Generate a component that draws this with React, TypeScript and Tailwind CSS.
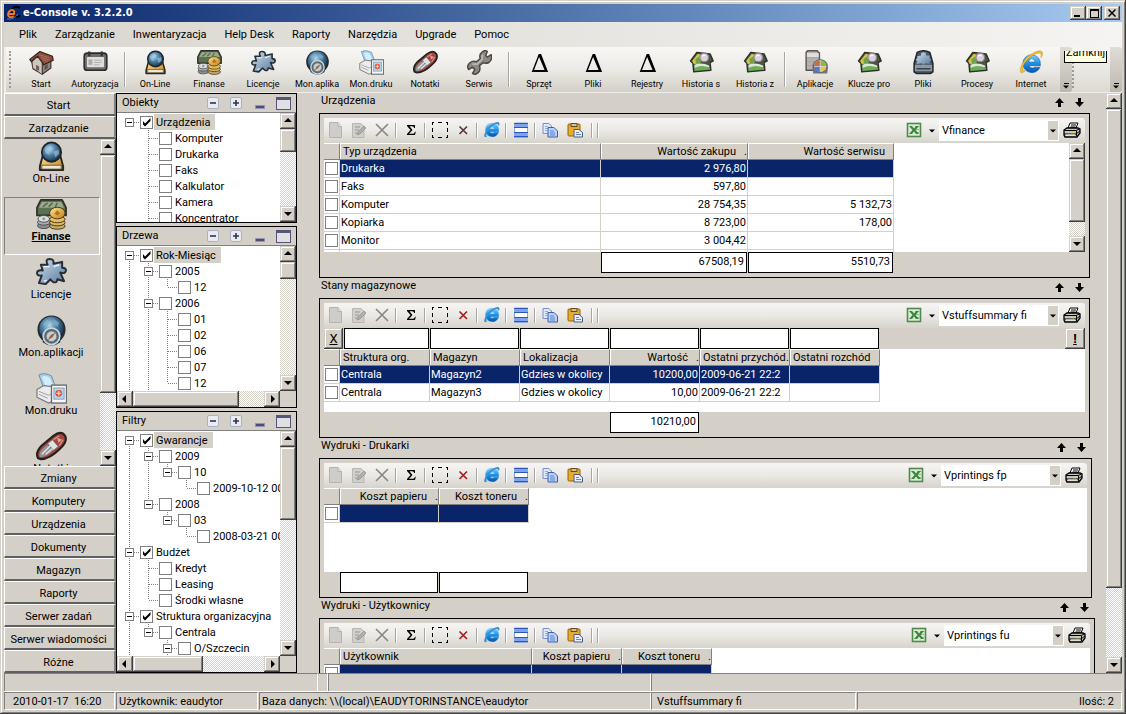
import React from "react";

const raised =
  "bg-[#d4d0c8] shadow-[inset_-1px_-1px_0_#404040,inset_1px_1px_0_#d4d0c8,inset_-2px_-2px_0_#808080,inset_2px_2px_0_#fff]";
const dither = "bg-[repeating-conic-gradient(#fff_0_25%,#d4d0c8_0_50%)] bg-[length:2px_2px]";

/* ---------- gradients shared by the icons ---------- */

function IconDefs() {
  return (
    <svg className="absolute size-0" aria-hidden="true">
      <defs>
        <radialGradient id="globe" cx="0.4" cy="0.35" r="0.7">
          <stop offset="0" stopColor="#b9d9ec" />
          <stop offset="0.45" stopColor="#4d7fa6" />
          <stop offset="1" stopColor="#12293f" />
        </radialGradient>
        <linearGradient id="steel" x1="0" y1="0" x2="1" y2="1">
          <stop offset="0" stopColor="#f2f4f6" />
          <stop offset="1" stopColor="#7d848c" />
        </linearGradient>
        <linearGradient id="puzzle" x1="0" y1="0" x2="1" y2="1">
          <stop offset="0" stopColor="#cfe0ef" />
          <stop offset="1" stopColor="#56789b" />
        </linearGradient>
        <linearGradient id="gold" x1="0" y1="0" x2="1" y2="1">
          <stop offset="0" stopColor="#ffe49a" />
          <stop offset="1" stopColor="#c07f12" />
        </linearGradient>
        <linearGradient id="ie" x1="0" y1="0" x2="0" y2="1">
          <stop offset="0" stopColor="#7fd0f8" />
          <stop offset="0.5" stopColor="#1f8fdf" />
          <stop offset="1" stopColor="#0a54b0" />
        </linearGradient>
      </defs>
    </svg>
  );
}

type IconProps = { className?: string };

function Svg({ className = "size-[26px]", children }: { className?: string; children: React.ReactNode }) {
  return (
    <svg viewBox="0 0 32 32" className={`shrink-0 ${className}`} aria-hidden="true">
      {children}
    </svg>
  );
}

const HouseIcon = (p: IconProps) => (
  <Svg {...p}>
    <path d="M3 12 L14 17 L17 31 L5 24Z" fill="#a89d95" stroke="#3b322d" strokeWidth="1.400" strokeLinejoin="round" />
    <path d="M5 22 V14 L11 8 L17 17 V31Z" fill="#cfc6be" />
    <path d="M17 17 L28 11 V23 L17 31Z" fill="#8f857e" stroke="#3b322d" strokeWidth="1.400" strokeLinejoin="round" />
    <path d="M1 12 L14 2 L30 8 L31 13 L19 19 L11 8 L3 15Z" fill="#8b4c3b" stroke="#33201a" strokeWidth="1.500" strokeLinejoin="round" />
    <path d="M13 6 L26 10 M15 9 L26 13 M17 12 L24 15" stroke="#b87a68" fill="none" />
    <path d="M9 19 L13 21 V27 L9 25Z" fill="#6d6058" />
    <path d="M20 20 L24 18 V23 L20 26Z" fill="#5e544d" />
  </Svg>
);

const CardIcon = (p: IconProps) => (
  <Svg {...p}>
    <rect x="1.500" y="4" width="29" height="22" rx="4" fill="#6d6d6f" stroke="#2b2b2d" strokeWidth="2" />
    <rect x="5" y="9" width="22" height="13" rx="1" fill="#dedede" />
    <path d="M8 2 v6 M24 2 v6" stroke="#333" strokeWidth="3" />
    <rect x="7" y="12" width="5" height="7" fill="#b6a9a4" />
    <path d="M14 13 h10 M14 16 h10 M14 19 h7" stroke="#b4b4b4" strokeWidth="1.300" />
  </Svg>
);

const OnlineIcon = (p: IconProps) => (
  <Svg {...p}>
    <path d="M7 15 H25 L28 26 V30 H4 V26Z" fill="url(#gold)" stroke="#2a2520" strokeWidth="2" strokeLinejoin="round" />
    <path d="M6 25 H26 V29 H6Z" fill="#eee8db" stroke="#50402a" strokeWidth="0.8" />
    <circle cx="16" cy="11.500" r="10" fill="url(#globe)" stroke="#1c242c" strokeWidth="1.800" />
    <path d="M9 8 Q12 4 16 5 L17 8 L13 10 L14 14 L10 13Z M18 11 L23 9 L24 13 L20 17Z" fill="#9cc5dc" opacity="0.65" />
  </Svg>
);

const FinanceIcon = (p: IconProps) => (
  <Svg {...p}>
    <path d="M5 1 H27 L31 9 V17 H1 V9Z" fill="#5c7152" stroke="#2d3129" strokeWidth="1.800" strokeLinejoin="round" />
    <path d="M6 3 H26 L29 9 H3Z" fill="#99ab88" />
    <path d="M7 8 L12 4 M13 8 L17 4 M20 8 L22 4" stroke="#53684b" strokeWidth="1.500" />
    <g stroke="#4a4a4a" strokeWidth="1">
      <ellipse cx="8" cy="27.500" rx="6.500" ry="3" fill="#8b8f93" />
      <ellipse cx="8" cy="24" rx="6.500" ry="3" fill="#aab0b5" />
      <ellipse cx="8" cy="20.500" rx="6" ry="3.500" fill="#d9dde0" />
    </g>
    <g stroke="#4a3818" strokeWidth="1">
      <ellipse cx="22" cy="28" rx="8" ry="3.200" fill="#bbae74" />
      <ellipse cx="22" cy="24.500" rx="8" ry="3.200" fill="#dfb95f" />
      <ellipse cx="22" cy="21" rx="8" ry="3.500" fill="#e3bd60" />
      <ellipse cx="22" cy="14.500" rx="8" ry="6" fill="url(#gold)" />
    </g>
    <path d="M19 15 L22 11.500 L25 15 L22 17Z" fill="#b67317" />
    <circle cx="8" cy="20.500" r="1.500" fill="#8d9296" />
  </Svg>
);

const PuzzleIcon = (p: IconProps) => (
  <Svg {...p}>
    <path
      d="M5 8 L12 8 Q9 2 14 2 Q19 2 18 7 L27 5 L27 11 Q31 11 31 14 Q30 18 25 16 L29 25 L22 23 Q22 27 18 26 Q15 24 15 23 L10 28 L3 27 L6 19 Q1 20 1 16 Q2 13 7 14Z"
      fill="url(#puzzle)"
      stroke="#272d35"
      strokeWidth="2"
      strokeLinejoin="round"
    />
    <path d="M8 10 L14 10 M18 10 L24 8 M8 25 L11 24" stroke="#eef5fa" strokeWidth="1.400" />
  </Svg>
);

const CompassIcon = (p: IconProps) => (
  <Svg {...p}>
    <circle cx="16" cy="15" r="14.500" fill="#262a2d" />
    <path d="M7 24 H25 V28 Q16 35 7 28Z" fill="#262a2d" />
    <circle cx="16" cy="14" r="12.500" fill="url(#globe)" />
    <path d="M7 9 L12 5 L14 9 L11 12Z M18 4 L24 8 L22 12 L18 9Z" fill="#86b2ca" opacity="0.7" />
    <circle cx="16" cy="22" r="8.500" fill="#59656e" stroke="#c4d5df" strokeWidth="1.800" />
    <circle cx="16" cy="22" r="5.500" fill="#c8cecf" stroke="#707a80" />
    <path d="M12 26 L15 21 L20 18 L17 23Z" fill="#9a6037" />
  </Svg>
);

const PrintIcon = (p: IconProps) => (
  <Svg {...p}>
    <path d="M3 2 Q9 -1 16 3 L20 14 L8 16Z" fill="#a5cff0" stroke="#718fa7" />
    <path d="M6 4 Q10 2 14 5 L18 13 L10 14Z" fill="#d5ecfd" />
    <path d="M1 17 L8 13 L25 15 L26 25 L13 31 L1 25Z" fill="#ececed" stroke="#77777d" strokeWidth="1.200" />
    <path d="M3 19 L13 23 L25 17 M3 22 L12 26" stroke="#9c9ca4" fill="none" />
    <rect x="16" y="12.500" width="15.500" height="18.500" fill="#f5f7f9" stroke="#6a6c72" strokeWidth="1.400" />
    <rect x="18.500" y="15.500" width="10.500" height="11.500" fill="#b1d8f1" stroke="#88a0b1" />
    <circle cx="23.500" cy="21" r="3.500" fill="#e24f37" />
    <path d="M23.500 18.500 v5 M21 21 h5" stroke="#ffd6bb" strokeWidth="1.200" />
  </Svg>
);

const KnifeIcon = (p: IconProps) => (
  <Svg {...p}>
    <path d="M2 28 Q-1 22 6 15 L18 5 Q26 -1 30 5 Q33 11 25 18 Q14 29 5 29Z" fill="#a8443b" stroke="#242020" strokeWidth="2.200" />
    <path d="M4 27 Q2 22 8 17 L12 14 L18 20 Q10 27 4 27Z" fill="#8f9497" />
    <path d="M12 13 L17 9 L23 16 L18 20Z" fill="#dfe2e4" stroke="#646468" strokeWidth="0.800" />
    <path d="M6 24 L15 15 M10 24 L17 18" stroke="#dfe1e2" strokeWidth="1.500" />
    <path d="M18 9 L24 5 M24 15 L28 9" stroke="#d98b7d" strokeWidth="1.500" />
    <path d="M22 7 L27 9 L23 12Z" fill="#d5aaa2" />
  </Svg>
);

const WrenchIcon = (p: IconProps) => (
  <Svg {...p}>
    <path
      d="M19 3 Q23 -1 26 2 L24 7 L26 9 L31 6 Q33 12 28 16 Q24 18 21 16 L16 20 Q18 27 13 30 Q10 32 7 30 L10 25 L7 22 L2 25 Q-1 20 4 16 Q8 13 12 15 L17 11 Q15 6 19 3Z"
      fill="#8d8883"
      stroke="#4b4640"
      strokeWidth="1.800"
      strokeLinejoin="round"
    />
    <path d="M20 6 L19 12 L13 18 L7 18" stroke="#bcb7b1" strokeWidth="2.200" fill="none" />
  </Svg>
);

const DeltaIcon = (p: IconProps) => (
  <Svg {...p}>
    <path d="M15 5 L18 5 L27 28 H6Z M15.500 9 L9 25.500 H22.500Z" fill="#000" fillRule="evenodd" />
  </Svg>
);

const HistoryIcon = (p: IconProps) => (
  <Svg {...p}>
    <path d="M2 14 L10 3 L27 5 L31 14 L27 16 L28 26 L6 28 L5 17Z" fill="#46583d" stroke="#2d302a" strokeWidth="1.800" strokeLinejoin="round" />
    <path d="M4 14 L11 5 L17 6 L14 17 L6 18Z" fill="#d9c540" />
    <path d="M8 12 L13 8 L15 16 L9 17Z" fill="#6aa250" />
    <path d="M7 19 Q16 15 26 20 L26 22 L7 23Z" fill="#dfe8d6" />
    <path d="M7 23 Q16 18 27 23 V25 L7 27Z" fill="#6cae58" />
    <path d="M23 14 L27 18" stroke="#594d46" strokeWidth="2.500" />
    <circle cx="19.500" cy="9.500" r="5.500" fill="#dcd0de" stroke="#8d8690" strokeWidth="1.600" />
    <path d="M17 8 Q19 6 21 7.500" stroke="#fff" strokeWidth="1.500" fill="none" />
  </Svg>
);

const AppsIcon = (p: IconProps) => (
  <Svg {...p}>
    <path d="M4 3 L6 1 H18 L21 4 V26 H4Z" fill="#b9b3af" stroke="#5a5552" strokeWidth="1.800" />
    <path d="M5 4 H20 V9 H5Z" fill="#e3dfdc" />
    <path d="M5 10 h15 M5 15 h15 M5 20 h10" stroke="#a29b97" />
    <path d="M12 22 Q12 12 22 12 Q32 12 32 22 L31 30 H13Z" fill="#6f7680" />
    <ellipse cx="22" cy="20.500" rx="8.500" ry="8" fill="#d8dde5" stroke="#4b4f56" />
    <path d="M21.500 13.500 V20.500 H14 Q14.500 14 21.500 13.500Z" fill="#d7663a" />
    <path d="M22.500 13.500 V20.500 H30 Q29.500 14 22.500 13.500Z" fill="#8cb940" />
    <path d="M14 21.500 H21.500 V28 Q15 28 14 21.500Z" fill="#4c7fd0" />
    <path d="M22.500 21.500 H30 Q29 28 22.500 28Z" fill="#edc246" />
  </Svg>
);

const DriveIcon = (p: IconProps) => (
  <Svg {...p}>
    <path d="M8 3 Q16 -1 24 3 L28 17 V28 L25 30 H7 L4 28 V17Z" fill="#4c5964" stroke="#20262c" strokeWidth="2" />
    <path d="M5 19 H27 V27 H5Z" fill="#8c99a5" />
    <path d="M7 24 h18" stroke="#36424c" strokeWidth="2" />
    <path d="M8 8 L13 7 Q12 3 16 3 Q20 3 19 7 L24 7 V11 Q28 12 24 15 V18 L18 17 Q16 21 14 17 L7 18 L8 14 Q4 12 8 11Z" fill="url(#puzzle)" />
  </Svg>
);

const IeIcon = (p: IconProps) => (
  <Svg {...p}>
    <path
      d="M16 6 A11.500 11.500 0 1 0 27 22 H20 Q16 25 12.500 20 H27.500 Q28 7 16 6Z M12.500 15.500 Q13 11 16 11 Q20 11 20.500 15.500Z"
      fill="url(#ie)"
      fillRule="evenodd"
      stroke="#0b5dac"
      strokeWidth="0.700"
    />
    <path d="M8 27 Q0 33 2 23 Q5 12 16 5 Q28 -2 30 3 Q31 6 28 10 Q30 3 24 4 Q15 6 7 17 Q2 26 8 27Z" fill="#f4bd2f" stroke="#b78515" strokeWidth="0.500" />
  </Svg>
);

const IeBlueIcon = () => (
  <Svg className="size-[18px]">
    <circle cx="16" cy="16" r="13" fill="#5bb6ec" opacity="0.55" />
    <path
      d="M16 4 A12 12 0 1 0 28 20 H20 Q16 24 12.500 19 H28 Q29 5 16 4Z M12.500 14 Q13 10 16 10 Q20 10 20.500 14Z"
      fill="url(#ie)"
      fillRule="evenodd"
    />
    <path d="M7 28 Q0 31 3 22 Q8 10 17 5 Q28 -1 29 4 Q30 6 28 9 Q27 4 21 6 Q11 11 7 21 Q5 26 7 28Z" fill="#2f92d8" />
  </Svg>
);

/* ---------- 16 px grid toolbar icons ---------- */

function Small({ children }: { children: React.ReactNode }) {
  return (
    <svg viewBox="0 0 16 16" className="size-[16px] shrink-0" aria-hidden="true">
      {children}
    </svg>
  );
}

const NewIcon = () => (
  <Small>
    <path d="M1.500 .5 H10 L13.500 4.500 V15.500 H1.500Z" fill="#cfcdc9" stroke="#b4b2ae" />
    <path d="M10 .5 V4.500 H13.500" fill="#e6e4e0" stroke="#b4b2ae" />
  </Small>
);
const EditIcon = () => (
  <Small>
    <path d="M1.500 1.500 H10 L13 4.500 V15.500 H1.500Z" fill="#d2d0cc" stroke="#b8b6b2" />
    <path d="M4 5 h5 M4 8 h4 M4 11 h3" stroke="#999793" />
    <path d="M6 13 L7 10 L13 4 L15 6 L9 12Z" fill="#b2b0ac" stroke="#94928e" strokeWidth="0.800" />
  </Small>
);
const DelIcon = () => (
  <Small>
    <path d="M2 2 L14 14 M14 2 L7 9 L2 14" stroke="#8b8985" strokeWidth="1.700" fill="none" />
  </Small>
);
const SigmaIcon = () => (
  <Small>
    <path d="M4 3 H12 V6 H11.200 Q11 4.200 9 4.200 H6.500 L9.500 8 L6 11.800 H10 Q11.500 11.800 12 9.800 H12.800 L12 13 H4 V12 L7.500 8 L4 4Z" fill="#000" />
  </Small>
);
const MarqueeIcon = () => (
  <Small>
    <path d="M0 .5 h2 M6 .5 h4 M14 .5 h2 M0 15.500 h2 M6 15.500 h4 M14 15.500 h2 M.5 0 v3 M.5 6 v4 M.5 13 v3 M15.500 0 v3 M15.500 6 v4 M15.500 13 v3" stroke="#000" shapeRendering="crispEdges" />
  </Small>
);
const CrossIcon = ({ dark }: { dark?: boolean }) => (
  <Small>
    <path d="M4.500 4.500 L12 12 M12 4.500 L4.500 12" stroke={dark ? "#5a3a3c" : "#a52023"} strokeWidth="1.700" />
  </Small>
);
const RowsIcon = () => (
  <Small>
    <path d="M2 1 H14 V5 H2Z M2 11 H14 V15 H2Z" fill="#7fa4ee" />
    <path d="M2 6 H14 V10 H2Z" fill="#fff" />
    <path d="M1.500 1 V15.500 H14.500 V1Z" stroke="#8fa8e0" fill="none" />
    <path d="M1 1.500 H15 M1 5.500 H15 M1 10.500 H15 M1 14.500 H15" stroke="#2b57bd" fill="none" />
  </Small>
);
const CopyIcon = () => (
  <Small>
    <path d="M1 1.500 H7 L9.500 4 V11.500 H1Z" fill="#dfe9fb" stroke="#7790c5" />
    <path d="M3 4.500 h3 M3 6.500 h3 M3 8.500 h2" stroke="#8faae2" />
    <path d="M6 5.500 H12 L15.500 9 V15 H6Z" fill="#b9d0f8" stroke="#3b5fae" />
    <path d="M8 9 h4 M8 11 h5 M8 13 h5" stroke="#5b83d6" />
  </Small>
);
const PasteIcon = () => (
  <Small>
    <rect x="1" y="2" width="12" height="12" rx="1" fill="#e9ab2b" stroke="#976109" />
    <path d="M4 1.500 H10 V4.500 H4Z" fill="#d8c088" stroke="#5d4c25" />
    <path d="M7 7.500 H12 L15.500 10.500 V15 H7Z" fill="#e8effb" stroke="#4a5c86" />
    <path d="M9 10.500 h3 M9 12.500 h5" stroke="#7186b3" />
  </Small>
);
const ExcelIcon = () => (
  <Small>
    <rect x="1.500" y="1.500" width="13" height="13" fill="#dcebd5" stroke="#4f8a4c" strokeWidth="1.600" />
    <path d="M9 4.500 h4 M9 7.500 h4 M9 10.500 h4" stroke="#8db98a" />
    <path d="M3 4 H6 L8 6.500 L10 4 H13 L9.500 8 L13 12 H10 L8 9.500 L6 12 H3 L6.500 8Z" fill="#3c8440" />
  </Small>
);
const PrinterIcon = () => (
  <svg viewBox="0 0 18 16" className="h-[16px] w-[18px] shrink-0" aria-hidden="true">
    <path d="M5 6 L7 1 H15 L13 6Z" fill="#fff" stroke="#000" />
    <path d="M8 3 h5 M7.500 5 h5" stroke="#000" />
    <path d="M1 8 L4 6 H15 L17 7 V11 L14 15 H2 L1 13Z" fill="#c6c3bd" stroke="#000" strokeWidth="1.300" />
    <path d="M1 8.500 H13 L16.500 7 M1 12 H13 L17 9 M13.500 9 V14" stroke="#000" fill="none" />
    <path d="M3 13 H12" stroke="#fff" />
    <path d="M8 10.500 h3" stroke="#e9dc26" strokeWidth="1.400" />
  </svg>
);

function Triangle({ dir, small }: { dir: "up" | "down" | "left" | "right"; small?: boolean }) {
  const d = {
    up: "M4 1 L8 5 H0Z",
    down: "M0 2 H8 L4 6Z",
    left: "M1 4 L5 0 V8Z",
    right: "M7 4 L3 0 V8Z",
  }[dir];
  return (
    <svg viewBox="0 0 8 8" className={`shrink-0 ${small ? "size-[6px]" : "size-[8px]"}`} aria-hidden="true">
      <path d={d} fill="#000" />
    </svg>
  );
}

/* ---------- scroll bars ---------- */

function VScroll({ thumb }: { thumb: string }) {
  return (
    <div className={`flex w-[16px] shrink-0 flex-col ${dither}`}>
      <button type="button" aria-label="Scroll up" className={`flex h-[16px] shrink-0 items-center justify-center ${raised}`}>
        <Triangle dir="up" />
      </button>
      <div className={`${raised} ${thumb}`} />
      <div className="flex-1" />
      <button type="button" aria-label="Scroll down" className={`flex h-[16px] shrink-0 items-center justify-center ${raised}`}>
        <Triangle dir="down" />
      </button>
    </div>
  );
}

function HScroll({ thumb }: { thumb: string }) {
  return (
    <div className="flex h-[16px] shrink-0 bg-[#d4d0c8] pr-[16px]">
      <div className={`flex flex-1 ${dither}`}>
        <button type="button" aria-label="Scroll left" className={`flex w-[16px] shrink-0 items-center justify-center ${raised}`}>
          <Triangle dir="left" />
        </button>
        <div className={`${raised} ${thumb}`} />
        <div className="flex-1" />
        <button type="button" aria-label="Scroll right" className={`flex w-[16px] shrink-0 items-center justify-center ${raised}`}>
          <Triangle dir="right" />
        </button>
      </div>
    </div>
  );
}

/* ---------- trees ---------- */

type Node = { cells: string; label: string; checked?: boolean; selected?: boolean };

/* One cell per indent level: "|" line, "T" branch, "L" last branch, "a".."d" expander with lines, "." empty. */
function TreeCell({ kind }: { kind: string }) {
  const top = "M9.500 0 V8";
  const bottom = "M9.500 8 V16";
  const right = "M9.500 8.500 H19";
  const lines: Record<string, string> = {
    "|": `${top} ${bottom}`,
    T: `${top} ${bottom} ${right}`,
    L: `${top} ${right}`,
    a: right,
    b: `${right} ${bottom}`,
    c: `${right} ${top} ${bottom}`,
    d: `${right} ${top}`,
  };
  return (
    <svg viewBox="0 0 19 16" className="h-[16px] w-[19px] shrink-0" aria-hidden="true" shapeRendering="crispEdges">
      {lines[kind] && <path d={lines[kind]} stroke="#808080" strokeDasharray="1 1" fill="none" />}
      {"abcd".includes(kind) && (
        <>
          <rect x="5.500" y="4.500" width="8" height="8" fill="#fff" stroke="#808080" />
          <path d="M7 8.500 H12" stroke="#000" />
        </>
      )}
    </svg>
  );
}

function Check({ checked, label }: { checked?: boolean; label?: string }) {
  return (
    <span className="grid size-[13px] shrink-0">
      <input
        type="checkbox"
        aria-label={label}
        defaultChecked={checked}
        className="peer col-start-1 row-start-1 size-[13px] appearance-none border border-[#808080] bg-white"
      />
      <svg viewBox="0 0 13 13" className="pointer-events-none invisible col-start-1 row-start-1 peer-checked:visible" aria-hidden="true">
        <path d="M3 5 V8.500 L5 10.500 L10.500 5 V2 L5 7.500Z" fill="#000" />
      </svg>
    </span>
  );
}

function HeaderBox({ plus }: { plus?: boolean }) {
  return (
    <svg viewBox="0 0 12 12" className="size-[12px]" aria-hidden="true">
      <rect x=".5" y=".5" width="11" height="11" rx="1.500" fill="#e9ebf0" stroke="#a9b1c4" />
      <path d={plus ? "M3 6 H9 M6 3 V9" : "M3 6 H9"} stroke="#33344c" strokeWidth="1.600" />
    </svg>
  );
}

function TreePanel({
  title,
  nodes,
  grow,
  vthumb,
  hthumb,
}: {
  title: string;
  nodes: Node[];
  grow: string;
  vthumb: string;
  hthumb?: string;
}) {
  return (
    <section className={`flex min-h-0 flex-col border border-black ${grow}`}>
      <header className="flex h-[19px] shrink-0 items-center border-b border-[#808080] pr-[5px] pl-[5px]">
        <h2 className="flex-1 leading-[16px]">{title}</h2>
        <button type="button" aria-label="Collapse all" className="mr-[11px]">
          <HeaderBox />
        </button>
        <button type="button" aria-label="Expand all" className="mr-[13px]">
          <HeaderBox plus />
        </button>
        <button type="button" aria-label="Minimize" className="mr-[11px] flex h-[12px] items-end">
          <span className="block h-[4px] w-[10px] border border-[#9393b5] bg-[#4d4d76]" />
        </button>
        <button type="button" aria-label="Maximize" className="block h-[13px] w-[15px] border border-t-3 border-[#555577] bg-[#dfdfe4]" />
      </header>
      <div className="flex min-h-0 flex-1 bg-white">
        <ul className="min-w-0 flex-1 overflow-hidden pt-px pl-[3px]">
          {nodes.map((n, i) => (
            <li key={i} className="h-[16px]">
              <label className="flex h-[16px] items-center whitespace-nowrap">
                {n.cells.split("").map((c, j) => (
                  <TreeCell key={j} kind={c} />
                ))}
                <span className="ml-px flex">
                  <Check checked={n.checked} />
                </span>
                <span className={`ml-px px-[2px] pt-px leading-[15px] ${n.selected ? "bg-[#d4d0c8] pr-[5px]" : ""}`}>{n.label}</span>
              </label>
            </li>
          ))}
        </ul>
        <VScroll thumb={vthumb} />
      </div>
      {hthumb && <HScroll thumb={hthumb} />}
    </section>
  );
}

const objects: Node[] = [
  { cells: "a", label: "Urządzenia", checked: true, selected: true },
  { cells: ".T", label: "Komputer" },
  { cells: ".T", label: "Drukarka" },
  { cells: ".T", label: "Faks" },
  { cells: ".T", label: "Kalkulator" },
  { cells: ".T", label: "Kamera" },
  { cells: ".T", label: "Koncentrator" },
];

const trees: Node[] = [
  { cells: "b", label: "Rok-Miesiąc", checked: true, selected: true },
  { cells: "|c", label: "2005" },
  { cells: "||L", label: "12" },
  { cells: "|c", label: "2006" },
  { cells: "||T", label: "01" },
  { cells: "||T", label: "02" },
  { cells: "||T", label: "06" },
  { cells: "||T", label: "07" },
  { cells: "||L", label: "12" },
];

const filters: Node[] = [
  { cells: "b", label: "Gwarancje", checked: true, selected: true },
  { cells: "|c", label: "2009" },
  { cells: "||d", label: "10" },
  { cells: "||.L", label: "2009-10-12 00:00" },
  { cells: "|d", label: "2008" },
  { cells: "|.d", label: "03" },
  { cells: "|..L", label: "2008-03-21 00:00" },
  { cells: "c", label: "Budżet", checked: true },
  { cells: "|T", label: "Kredyt" },
  { cells: "|T", label: "Leasing" },
  { cells: "|L", label: "Środki własne" },
  { cells: "c", label: "Struktura organizacyjna", checked: true },
  { cells: "|d", label: "Centrala" },
  { cells: "|.c", label: "O/Szczecin" },
];

/* ---------- grids ---------- */

type Column = { label: string; width: string; right?: boolean; dot?: boolean };

function Separator() {
  return (
    <span className="flex w-[6px] shrink-0 justify-center">
      <span className="h-[15px] w-[2px] border-r border-l border-r-white border-l-[#a6a6a6]" />
    </span>
  );
}

function ToolButton({ label, wide, children }: { label: string; wide?: boolean; children: React.ReactNode }) {
  return (
    <button type="button" aria-label={label} className={`flex shrink-0 items-center justify-center pb-px ${wide ? "w-[28px]" : "w-[23px]"}`}>
      {children}
    </button>
  );
}

function GridToolbar({ view, darkCross }: { view: string; darkCross?: boolean }) {
  return (
    <div className="flex h-[25px] shrink-0 items-center rounded-tr-[3px] bg-linear-to-b from-[#f6f5f3] via-[#ebe9e5] to-[#d6d3cb]">
      <ToolButton label="New"><NewIcon /></ToolButton>
      <ToolButton label="Edit"><EditIcon /></ToolButton>
      <ToolButton label="Delete"><DelIcon /></ToolButton>
      <Separator />
      <ToolButton label="Sum"><SigmaIcon /></ToolButton>
      <Separator />
      <ToolButton label="Select"><MarqueeIcon /></ToolButton>
      <ToolButton label="Clear"><CrossIcon dark={darkCross} /></ToolButton>
      <Separator />
      <ToolButton label="Browser"><IeBlueIcon /></ToolButton>
      <Separator />
      <ToolButton label="Rows"><RowsIcon /></ToolButton>
      <Separator />
      <ToolButton label="Copy"><CopyIcon /></ToolButton>
      <ToolButton label="Paste" wide><PasteIcon /></ToolButton>
      <Separator />
      <Separator />
      <span className="flex-1" />
      <ToolButton label="Export"><ExcelIcon /></ToolButton>
      <button type="button" aria-label="Export options" className="flex w-[14px] shrink-0 items-center justify-center">
        <Triangle dir="down" small />
      </button>
      <span className="grid h-[21px] w-[120px] shrink-0 bg-white">
        <select aria-label="View" defaultValue={view} className="col-start-1 row-start-1 appearance-none bg-transparent pt-px pl-[3px] outline-none">
          <option>{view}</option>
        </select>
        <span className="pointer-events-none col-start-1 row-start-1 my-px mr-px flex w-[10px] items-center justify-center justify-self-end bg-[#d4d0c8]">
          <Triangle dir="down" small />
        </span>
      </span>
      <button type="button" aria-label="Print" className="flex w-[26px] shrink-0 items-center justify-center pb-px">
        <PrinterIcon />
      </button>
    </div>
  );
}

function Grid({ columns, rows, width }: { columns: Column[]; rows: string[][]; width: string }) {
  return (
    <table className={`table-fixed border-separate border-spacing-0 ${width}`}>
      <colgroup>
        <col className="w-[15px]" />
        {columns.map((c, i) => (
          <col key={i} className={c.width} />
        ))}
      </colgroup>
      <thead>
        <tr className="h-[17px]">
          <th className="border-t border-b border-t-white border-b-[#808080] bg-[#d4d0c8] p-0" />
          {columns.map((c, i) => (
            <th
              key={i}
              className="overflow-hidden border-t border-b border-l border-t-white border-b-[#808080] border-l-[#808080] bg-[#d4d0c8] p-0 font-normal last:border-r last:border-r-[#808080]"
            >
              <div className="flex h-[15px] items-center border-l border-white pt-px pl-[2px] leading-[14px] whitespace-nowrap">
                <span className={`min-w-0 flex-1 ${c.right ? "pr-[8px] text-right" : "text-left"}`}>{c.label}</span>
                {c.dot && <span className="w-[3px] text-right">.</span>}
              </div>
            </th>
          ))}
        </tr>
      </thead>
      <tbody>
        {rows.map((r, i) => (
          <tr key={i} className={`h-[18px] ${i === 0 ? "bg-[#0a246a] text-white" : "bg-white"}`}>
            <td className="border-b border-[#d4d0c8] bg-white p-0">
              <span className="flex justify-center">
                <Check label={r[0] || "Row"} />
              </span>
            </td>
            {r.map((v, j) => (
              <td
                key={j}
                className={`overflow-hidden border-b border-l border-[#d4d0c8] px-px pt-px pb-0 leading-[16px] whitespace-nowrap last:border-r ${columns[j].right && /\d/.test(v) ? "text-right" : ""}`}
              >
                {v}
              </td>
            ))}
          </tr>
        ))}
      </tbody>
    </table>
  );
}

function ArrowIcon({ down }: { down?: boolean }) {
  return (
    <svg viewBox="0 0 9 9" className="size-[9px]" aria-hidden="true">
      <path d={down ? "M3 0 H6 V4 H9 L4.500 9 L0 4 H3Z" : "M3 9 H6 V5 H9 L4.500 0 L0 5 H3Z"} fill="#000" />
    </svg>
  );
}

function GridSection({ title, margin, children }: { title: string; margin: string; children: React.ReactNode }) {
  return (
    <section className={margin}>
      <header className="flex h-[20px] items-center pr-[6px] pb-px pl-[2px]">
        <h2 className="flex-1 pb-[4px] leading-[15px]">{title}</h2>
        <button type="button" aria-label="Move up" className="mr-[11px]"><ArrowIcon /></button>
        <button type="button" aria-label="Move down"><ArrowIcon down /></button>
      </header>
      <div className="flex flex-col border border-black p-[4px]">{children}</div>
    </section>
  );
}

function Total({ width, value }: { width: string; value?: string }) {
  return (
    <output className={`mr-px block h-[21px] shrink-0 border border-black bg-white px-[2px] pt-px text-right leading-[16px] ${width}`}>{value}</output>
  );
}

const deviceColumns: Column[] = [
  { label: "Typ urządzenia", width: "w-[261px]" },
  { label: "Wartość zakupu", width: "w-[147px]", right: true, dot: true },
  { label: "Wartość serwisu", width: "w-[147px]", right: true },
];
const deviceRows = [
  ["Drukarka", "2 976,80", ""],
  ["Faks", "597,80", ""],
  ["Komputer", "28 754,35", "5 132,73"],
  ["Kopiarka", "8 723,00", "178,00"],
  ["Monitor", "3 004,42", ""],
  ["", "", ""],
];
const stockColumns: Column[] = [
  { label: "Struktura org.", width: "w-[90px]" },
  { label: "Magazyn", width: "w-[90px]" },
  { label: "Lokalizacja", width: "w-[90px]" },
  { label: "Wartość", width: "w-[90px]", right: true, dot: true },
  { label: "Ostatni przychód", width: "w-[90px]", dot: true },
  { label: "Ostatni rozchód", width: "w-[91px]" },
];
const stockRows = [
  ["Centrala", "Magazyn2", "Gdzies w okolicy", "10200,00", "2009-06-21 22:2", ""],
  ["Centrala", "Magazyn3", "Gdzies w okolicy", "10,00", "2009-06-21 22:2", ""],
];
const printerColumns: Column[] = [
  { label: "Koszt papieru", width: "w-[99px]", right: true, dot: true },
  { label: "Koszt toneru", width: "w-[91px]", right: true, dot: true },
];
const userColumns: Column[] = [
  { label: "Użytkownik", width: "w-[192px]" },
  { label: "Koszt papieru", width: "w-[90px]", right: true, dot: true },
  { label: "Koszt toneru", width: "w-[91px]", right: true, dot: true },
];

/* ---------- application chrome ---------- */

const launcherGroups: { label: string; Icon: (p: IconProps) => React.ReactElement }[][] = [
  [
    { label: "Start", Icon: HouseIcon },
    { label: "Autoryzacja", Icon: CardIcon },
  ],
  [
    { label: "On-Line", Icon: OnlineIcon },
    { label: "Finanse", Icon: FinanceIcon },
    { label: "Licencje", Icon: PuzzleIcon },
    { label: "Mon.aplika", Icon: CompassIcon },
    { label: "Mon.druku", Icon: PrintIcon },
    { label: "Notatki", Icon: KnifeIcon },
    { label: "Serwis", Icon: WrenchIcon },
  ],
  [
    { label: "Sprzęt", Icon: DeltaIcon },
    { label: "Pliki", Icon: DeltaIcon },
    { label: "Rejestry", Icon: DeltaIcon },
    { label: "Historia s", Icon: HistoryIcon },
    { label: "Historia z", Icon: HistoryIcon },
  ],
  [
    { label: "Aplikacje", Icon: AppsIcon },
    { label: "Klucze pro", Icon: HistoryIcon },
    { label: "Pliki", Icon: DriveIcon },
    { label: "Procesy", Icon: HistoryIcon },
    { label: "Internet", Icon: IeIcon },
  ],
];

const navItems: { label: string; Icon: (p: IconProps) => React.ReactElement; active?: boolean }[] = [
  { label: "On-Line", Icon: OnlineIcon },
  { label: "Finanse", Icon: FinanceIcon, active: true },
  { label: "Licencje", Icon: PuzzleIcon },
  { label: "Mon.aplikacji", Icon: CompassIcon },
  { label: "Mon.druku", Icon: PrintIcon },
  { label: "Notatki", Icon: KnifeIcon },
];

const menus = ["Plik", "Zarządzanie", "Inwentaryzacja", "Help Desk", "Raporty", "Narzędzia", "Upgrade", "Pomoc"];
const bottomGroups = ["Zmiany", "Komputery", "Urządzenia", "Dokumenty", "Magazyn", "Raporty", "Serwer zadań", "Serwer wiadomości", "Różne"];

function NavButton({ label }: { label: string }) {
  return (
    <button
      type="button"
      className="h-[23px] shrink-0 border-t border-r-2 border-b-2 border-l border-t-white border-r-[#808080] border-b-[#606060] border-l-white bg-[#d4d0c8] pt-[4px] pr-[2px] text-center leading-[16px]"
    >
      {label}
    </button>
  );
}

function Overflow() {
  return (
    <button type="button" aria-label="More" className="flex w-[12px] shrink-0 flex-col items-center justify-end rounded-r-[3px] bg-linear-to-b from-[#e0ddd6] to-[#bcb8ae] pb-[2px]">
      <span className="h-px w-[5px] bg-black" />
      <Triangle dir="down" small />
    </button>
  );
}

const caption = "flex h-[14px] w-[16px] items-center justify-center " + raised;

export default function App() {
  return (
    <div className="flex h-screen flex-col overflow-hidden border-r border-b border-[#404040] bg-[#d4d0c8] pt-px pl-px font-['Roboto','Liberation_Sans',sans-serif] text-[11px] text-black">
      <IconDefs />
      <div className="flex min-h-0 flex-1 flex-col border-t border-r border-b border-l border-t-white border-r-[#808080] border-b-[#808080] border-l-white p-[2px]">
        <div className="flex h-[18px] shrink-0 items-center bg-linear-to-r from-[#0a246a] to-[#a6caf0] pr-[2px] pl-[2px]">
          <svg viewBox="0 0 16 16" className="size-[16px] shrink-0" aria-hidden="true">
            <path d="M14 3 Q9 0 6 4 Q5 11 9 12 Q13 12 14 10" stroke="#000" strokeWidth="1.800" fill="none" />
            <path d="M3 9 H8 Q9 5 6 5 Q2 6 2 10 Q3 14 8 11" stroke="#ee7825" strokeWidth="1.900" fill="none" />
            <path d="M1 14 Q8 15 12 9" stroke="#3f7fd0" fill="none" />
          </svg>
          <h1 className="ml-px flex-1 font-['DejaVu_Sans_Condensed','DejaVu_Sans',sans-serif] text-[11px] font-bold text-white">e-Console v. 3.2.2.0</h1>
          <button type="button" aria-label="Minimize" className={caption}>
            <span className="mt-[6px] mr-[3px] h-[2px] w-[6px] bg-black" />
          </button>
          <button type="button" aria-label="Maximize" className={caption}>
            <span className="h-[9px] w-[9px] border border-t-2 border-black" />
          </button>
          <button type="button" aria-label="Close" className={`ml-[2px] ${caption}`}>
            <svg viewBox="0 0 8 8" className="size-[8px]" aria-hidden="true">
              <path d="M.5 .5 L7.500 7.500 M7.500 .5 L.5 7.500" stroke="#000" strokeWidth="1.500" />
            </svg>
          </button>
        </div>

        <nav className="flex h-[25px] shrink-0 items-center gap-[18px] bg-linear-to-r from-[#d9d6cf] to-[#f5f4f2] pt-[2px] pl-[15px]">
          {menus.map((m) => (
            <button key={m} type="button">{m}</button>
          ))}
        </nav>

        <div className="flex h-[46px] shrink-0 bg-[#eeedea] pb-px pl-[2px]">
          <div className="flex min-w-0 flex-1 items-stretch bg-linear-to-b from-[#f8f7f5] via-[#eceae6] to-[#d3d0c7]">
            <span className="my-[4px] ml-[3px] w-[5px] shrink-0 border-l-2 border-dotted border-[#9d9a93]" />
            {launcherGroups.map((g, gi) => (
              <React.Fragment key={gi}>
                {gi > 0 && (
                  <span className="flex w-[6px] shrink-0 justify-center py-[5px]">
                    <span className="w-[2px] border-r border-l border-r-white border-l-[#a6a6a6]" />
                  </span>
                )}
                {g.map(({ label, Icon }, i) => (
                  <button key={i} type="button" className="flex w-[54px] min-w-0 flex-col items-center pt-[3px] text-[9px] leading-[12px] whitespace-nowrap">
                    <Icon className="size-[25px]" />
                    <span className="pt-[3px]">{label}</span>
                  </button>
                ))}
              </React.Fragment>
            ))}
            <span className="flex-1" />
            <Overflow />
          </div>
          <div className="relative flex w-[50px] shrink-0 bg-linear-to-b from-[#f6f5f3] to-[#dddad3]">
            <span className="my-[4px] flex-1 border-l-2 border-dotted border-[#9d9a93]" />
            <Overflow />
            <span className="absolute top-[4px] -left-[8px] z-10 flex h-[12px] w-[43px] items-end justify-center overflow-hidden border border-t-0 border-black bg-[#ffffe1] pb-[2px] leading-[14px]">
              Zamknij
            </span>
          </div>
        </div>

        <div className="flex min-h-0 flex-1">
          <aside className="flex w-[112px] shrink-0 flex-col">
            <NavButton label="Start" />
            <NavButton label="Zarządzanie" />
            <div className="flex min-h-0 flex-1">
              <ul className="min-w-0 flex-1 overflow-hidden">
                {navItems.map(({ label, Icon, active }) => (
                  <li key={label}>
                    <a
                      href="#"
                      className={`flex h-[58px] w-full flex-col items-center border pt-px pr-[2px] leading-[14px] ${
                        active ? "border-t-[#808080] border-r-white border-b-white border-l-[#808080] font-bold underline" : "border-transparent"
                      }`}
                    >
                      <Icon className="size-[31px]" />
                      {label}
                    </a>
                  </li>
                ))}
              </ul>
              <VScroll thumb="h-[238px]" />
            </div>
            {bottomGroups.map((b) => (
              <NavButton key={b} label={b} />
            ))}
          </aside>

          <div className="flex w-[181px] shrink-0 flex-col gap-[3px]">
            <TreePanel title="Obiekty" nodes={objects} grow="h-[130px] shrink-0" vthumb="h-[23px]" />
            <TreePanel title="Drzewa" nodes={trees} grow="h-[182px] shrink-0" vthumb="h-[17px]" hthumb="w-[106px]" />
            <TreePanel title="Filtry" nodes={filters} grow="flex-1" vthumb="h-[73px]" hthumb="w-[70px]" />
          </div>

          <main className="min-w-0 flex-1 overflow-hidden pl-[22px]">
            <GridSection title="Urządzenia" margin="mr-[16px]">
              <GridToolbar view="Vfinance" darkCross />
              <div className="flex h-[109px] bg-white">
                <div className="min-w-0 flex-1 overflow-hidden">
                  <Grid columns={deviceColumns} rows={deviceRows} width="w-[570px]" />
                </div>
                <VScroll thumb="h-[63px]" />
              </div>
              <div className="flex pl-[277px]">
                <Total width="w-[146px]" value="67508,19" />
                <Total width="w-[145px]" value="5510,73" />
              </div>
            </GridSection>

            <GridSection title="Stany magazynowe" margin="mr-[16px]">
              <GridToolbar view="Vstuffsummary fi" />
              <div className="flex h-[21px]">
                <button type="button" className={`mr-px w-[19px] shrink-0 text-[13px] underline ${raised}`}>X</button>
                {stockColumns.map((c, i) => (
                  <input key={c.label} aria-label={c.label} className={`mr-px shrink-0 border border-black bg-white px-[2px] ${i === 0 ? "w-[85px]" : "w-[89px]"}`} />
                ))}
                <span className="flex-1" />
                <button type="button" className={`w-[20px] shrink-0 text-[13px] font-bold underline ${raised}`}>!</button>
              </div>
              <div className="h-[63px] bg-white">
                <Grid columns={stockColumns} rows={stockRows} width="w-[556px]" />
              </div>
              <div className="flex pl-[286px]">
                <Total width="w-[89px]" value="10210,00" />
              </div>
            </GridSection>

            <GridSection title="Wydruki - Drukarki" margin="mr-[14px]">
              <GridToolbar view="Vprintings fp" />
              <div className="h-[84px] bg-white">
                <Grid columns={printerColumns} rows={[["", ""]]} width="w-[205px]" />
              </div>
              <div className="flex pl-[16px]">
                <Total width="w-[98px]" />
                <Total width="w-[89px]" />
              </div>
            </GridSection>

            <GridSection title="Wydruki - Użytkownicy" margin="mr-[11px]">
              <GridToolbar view="Vprintings fu" />
              <div className="h-[84px] bg-white">
                <Grid columns={userColumns} rows={[["", "", ""]]} width="w-[388px]" />
              </div>
            </GridSection>
          </main>
          <VScroll thumb="h-[479px]" />
        </div>

        <div className="flex h-[18px] shrink-0">
          <div className="w-[314px] shrink-0 border-t border-r border-l border-t-[#808080] border-r-white border-l-[#808080]" />
          <div className="w-[10px] shrink-0 border-t border-r border-t-[#808080] border-r-white" />
          <div className="w-[323px] shrink-0 border-t border-r border-l border-t-[#808080] border-r-white border-l-[#808080]" />
          <div className="flex-1 border-t border-l border-[#808080]" />
        </div>
        <footer className="flex h-[19px] shrink-0 border-t border-white leading-[18px] whitespace-nowrap">
          <div className="w-[111px] shrink-0 border border-t-[#808080] border-r-white border-b-white border-l-[#808080] pl-[8px] whitespace-pre">2010-01-17  16:20</div>
          <div className="ml-px w-[142px] shrink-0 border border-t-[#808080] border-r-white border-b-white border-l-[#808080] pl-[2px]">Użytkownik: eaudytor</div>
          <div className="ml-px w-[392px] shrink-0 border border-t-[#808080] border-r-white border-b-white border-l-[#808080] pl-[2px]">Baza danych: \\(local)\EAUDYTORINSTANCE\eaudytor</div>
          <div className="w-[205px] shrink-0 border border-t-[#808080] border-r-white border-b-white border-l-[#808080] pl-[5px]">Vstuffsummary fi</div>
          <div className="ml-px flex-1 border border-t-[#808080] border-r-white border-b-white border-l-[#808080] pr-[7px] text-right">Ilość: 2</div>
        </footer>
      </div>
    </div>
  );
}
